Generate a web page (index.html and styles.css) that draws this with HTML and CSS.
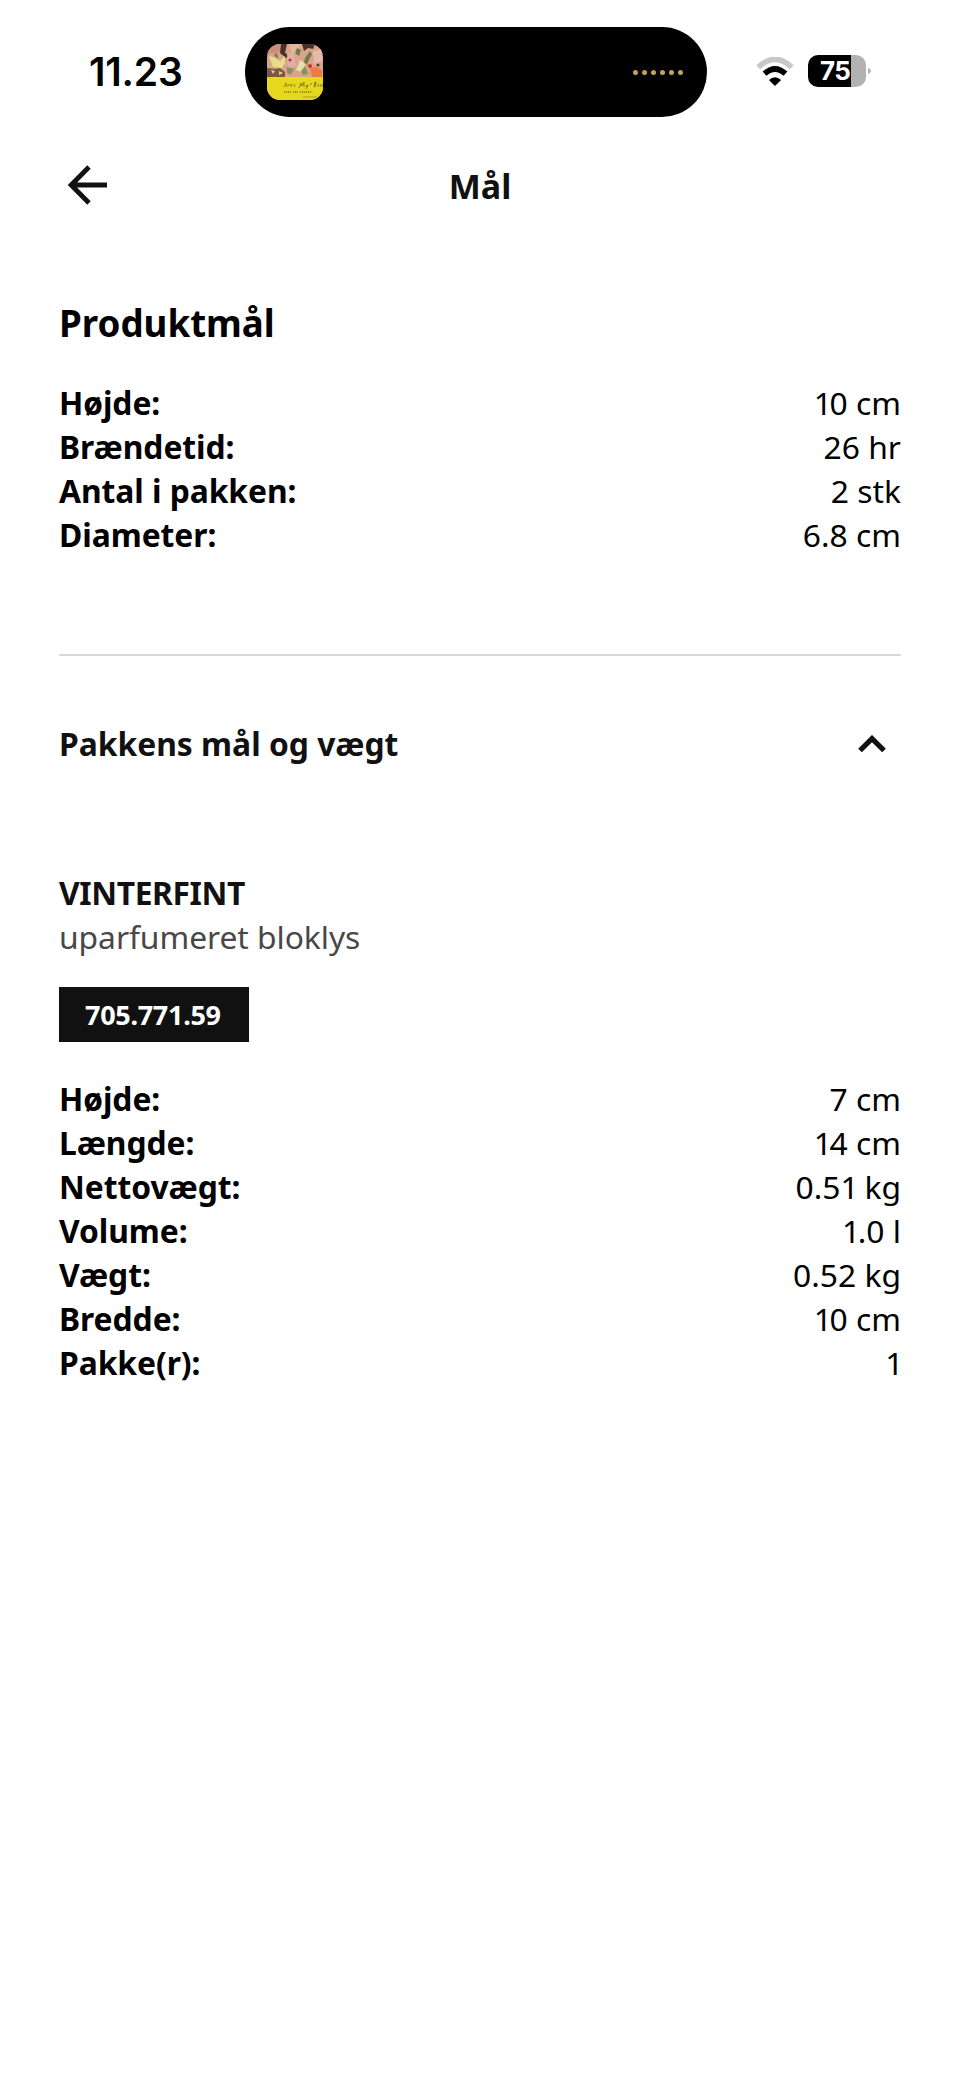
FILE: index.html
```html
<!DOCTYPE html>
<html lang="da">
<head>
    <meta charset="UTF-8">
    <meta name="viewport" content="width=device-width, initial-scale=1.0">
    <title>Mål</title>
    <link rel="stylesheet" href="styles.css">
</head>
<body>
    <div class="status-bar">
        <div class="time">11.23</div>
        <div class="island">
            <svg class="cover" viewBox="0 0 56 56">
                <rect width="56" height="56" fill="#d9a48c"/>
                <path d="M0 0h18l-4 8-14 2z" fill="#c98f7a"/>
                <path d="M14 0h6l-2 9 5 2-4 3-6-5zM35 0h13l-2 5-5-1-4 3z" fill="#4a3026"/>
                <path d="M22 0h12l-3 8-6 2z" fill="#e0b79a"/>
                <path d="M2 12l7 2 4 3 5-5v7l-3 5-9-1z" fill="#e8dc86"/>
                <path d="M7 11l3-2 1 6zM30 4l4 2-2 6-4-3zM38 14l5-7 2 3-5 10-4 3z" fill="#6f7a45"/>
                <path d="M20 10l6-3 3 15-8 2z" fill="#dfb0a8"/>
                <path d="M46 8l8-3 2 12-9 3z" fill="#e7b9aa"/>
                <path d="M33 16l6 4-4 8-6-2z" fill="#e6dcae"/>
                <path d="M0 24l8 1 5-1 5 4v5H0z" fill="#7d5740"/>
                <path d="M4 26l4 1-2 3zM12 27l4 2-4 2z" fill="#e3cf9e"/>
                <path d="M20 23l7 2-3 6-4-2zM34 27l4-5 3 8-5 1z" fill="#87915c"/>
                <path d="M43 24l6-1 6 3v7H45z" fill="#f07a45"/>
                <circle cx="23" cy="16" r="1.5" fill="#b8332e"/>
                <circle cx="43" cy="22" r="2" fill="#c4352c"/>
                <circle cx="51" cy="21" r="1.5" fill="#583828"/>
                <rect y="33" width="56" height="23" fill="#e6d81d"/>
                <path d="M17 43l2-4 1 4m1-2h3m1-1l-1 3m3-3l1 3m4 1l2-5 1 3 2-4v5m2-2l1 2 1-2-2 4m4-5h2m2 3l1-5q3 0 0 2 3 1-1 3m5-3l-1 3m3-3v3m1-3l2 3m0-6l-1 6" fill="none" stroke="#756b18" stroke-width=".8"/>
                <path d="M17 48h7m2 0h5m2 0h12" stroke="#8b811b" stroke-width="1.5" stroke-dasharray="1.3 .7"/>
                <path d="M36 53h15" stroke="#aaa01d"/>
            </svg>
            <div class="dots"><i></i><i></i><i></i><i></i><i></i><i></i></div>
        </div>
        <svg class="wifi" viewBox="0 0 38 29">
            <path d="M2.2 10.2Q19-5.5 35.8 10.2" fill="none" stroke="#c8c8c8" stroke-width="5.6"/>
            <path d="M8.5 16.7Q19 7.2 29.5 16.7" fill="none" stroke="#000" stroke-width="5.6"/>
            <path d="M12.9 22.9Q19 17.6 25.1 22.9L19 29z" fill="#000"/>
        </svg>
        <div class="battery"><span>75</span></div>
        <svg class="battery-tip" viewBox="0 0 4 8"><path d="M0 0q4 1.3 4 4t-4 4z" fill="#b2b2b2"/></svg>
    </div>

    <header class="nav">
        <svg class="back" viewBox="0 0 40 40">
            <path d="M21 2L3.2 20 21 38M3.2 20H39" fill="none" stroke="#111" stroke-width="4.8"/>
        </svg>
        <h1>Mål</h1>
    </header>

    <main>
        <h2>Produktmål</h2>
        <dl class="measures">
            <dt>Højde:</dt><dd><span class="one">1</span>0 cm</dd>
            <dt>Brændetid:</dt><dd>26 hr</dd>
            <dt>Antal i pakken:</dt><dd>2 stk</dd>
            <dt>Diameter:</dt><dd>6.8 cm</dd>
        </dl>

        <hr>

        <div class="accordion">
            <h3>Pakkens mål og vægt</h3>
            <svg class="chevron" viewBox="0 0 28 18">
                <path d="M2 15.5L14 3.6 26 15.5" fill="none" stroke="#111" stroke-width="5.2"/>
            </svg>
        </div>

        <div class="package">
            <h4>VINTERFINT</h4>
            <p class="description">uparfumeret bloklys</p>
            <span class="article-number">705.771.59</span>
            <dl class="measures">
                <dt>Højde:</dt><dd>7 cm</dd>
                <dt>Længde:</dt><dd><span class="one">1</span>4 cm</dd>
                <dt>Nettovægt:</dt><dd>0.5<span class="one">1</span> kg</dd>
                <dt>Volume:</dt><dd><span class="one">1</span>.0 l</dd>
                <dt>Vægt:</dt><dd>0.52 kg</dd>
                <dt>Bredde:</dt><dd><span class="one">1</span>0 cm</dd>
                <dt>Pakke(r):</dt><dd><span class="one">1</span></dd>
            </dl>
        </div>
    </main>
</body>
</html>
```

FILE: styles.css
```css
* {
    box-sizing: border-box;
    margin: 0;
    padding: 0;
}
body {
    font-family: "Noto Sans", sans-serif;
    font-size: 31.8px;
    line-height: 44px;
    color: #000;
    background-color: #fff;
}
.status-bar {
    display: flex;
    align-items: center;
    height: 145px;
    padding-left: 89px;
    font-family: Inter, sans-serif;
}
.time {
    width: 156px;
    margin-bottom: 2px;
    font-size: 39px;
    font-weight: 600;
    letter-spacing: -0.2px;
}
.island {
    display: flex;
    align-items: center;
    justify-content: space-between;
    width: 462px;
    height: 90px;
    margin-bottom: 1px;
    padding: 0 24px 0 22px;
    border-radius: 45px;
    background-color: #000;
}
.cover {
    width: 56px;
    height: 56px;
    border-radius: 13px;
}
.dots {
    display: flex;
    gap: 4px;
}
.dots i {
    width: 5px;
    height: 5px;
    border-radius: 50%;
    background-color: #c2a35a;
}
.wifi {
    width: 38px;
    height: 29px;
    margin-left: 49px;
    margin-bottom: 3px;
}
.battery {
    width: 58px;
    height: 32px;
    margin-left: 14px;
    margin-bottom: 3px;
    padding-left: 12px;
    border-radius: 10px;
    background: linear-gradient(to right, #000 43.5px, #b2b2b2 43.5px);
    color: #fff;
    font-size: 26px;
    font-weight: 700;
    line-height: 32px;
    letter-spacing: -0.5px;
}
.battery-tip {
    width: 3px;
    height: 8px;
    margin-left: 2px;
    margin-bottom: 3px;
}
.nav {
    display: grid;
    grid-template-columns: 68px 1fr 68px;
    align-items: center;
    height: 82px;
    color: #111;
}
.back {
    width: 40px;
    height: 40px;
    margin-left: 68px;
    margin-bottom: 3px;
}
.nav h1 {
    font-size: 34px;
    text-align: center;
}
main {
    padding: 72px 59px 0;
}
h2 {
    font-size: 36.7px;
    line-height: 48px;
}
.measures {
    display: grid;
    grid-template-columns: 1fr auto;
    margin-top: 34px;
}
dt {
    font-weight: 700;
    letter-spacing: -0.05px;
}
dd {
    text-align: right;
}
.one {
    letter-spacing: -2.5px;
}
hr {
    margin-top: 97px;
    border: none;
    border-top: 2px solid #d6d6d6;
}
.accordion {
    display: flex;
    align-items: center;
    justify-content: space-between;
    height: 175px;
    padding-right: 15px;
    color: #111;
}
h3, h4 {
    font-size: 31.8px;
}
.chevron {
    width: 28px;
    height: 18px;
}
.package {
    padding-top: 40px;
}
h4 {
    color: #111;
    letter-spacing: -0.4px;
}
.description {
    color: #484848;
    letter-spacing: -0.05px;
}
.article-number {
    display: block;
    width: 190px;
    height: 55px;
    margin-top: 28px;
    padding-left: 26px;
    background-color: #111;
    color: #fff;
    font-size: 27px;
    font-weight: 700;
    line-height: 55px;
    letter-spacing: -0.3px;
}
.package .measures {
    margin-top: 35px;
}
```
